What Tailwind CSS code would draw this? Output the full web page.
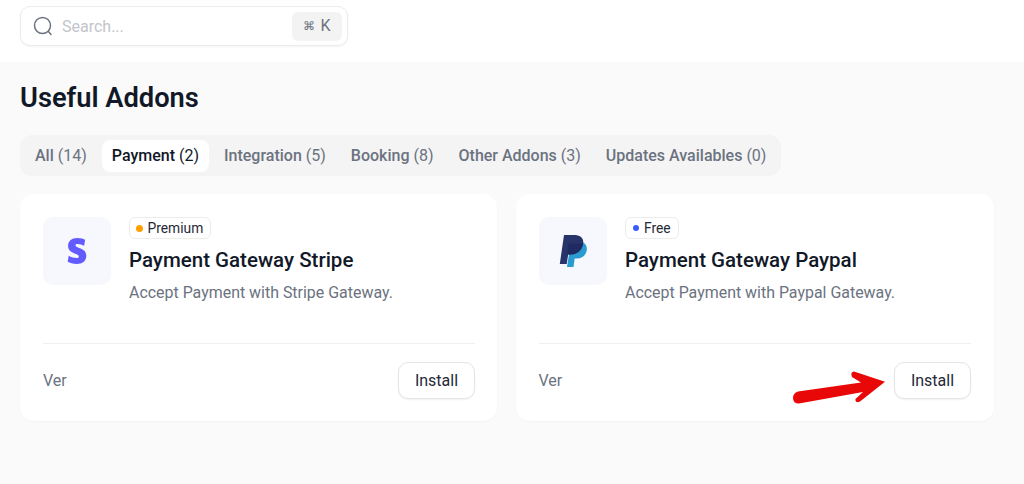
<!DOCTYPE html>
<html lang="en">
<head>
  <meta charset="UTF-8">
  <meta name="viewport" content="width=device-width, initial-scale=1.0">
  <title>Useful Addons</title>
  <script src="https://cdn.jsdelivr.net/npm/@tailwindcss/browser@4"></script>
</head>
<body class="relative h-[484px] w-[1024px] overflow-hidden bg-[#fafafa] font-['Roboto',sans-serif] text-[#111827]">
  <header class="h-[62px] bg-white px-5 pt-[6px]">
    <div class="flex h-[40px] w-[328px] items-center rounded-[10px] border border-[#ececec] bg-white pl-[12px] pr-[5px] shadow-[0_1px_2px_rgba(0,0,0,0.05)]">
      <svg class="h-[20px] w-[20px]" viewBox="0 0 20 20" fill="none" stroke="#6b7280" stroke-width="1.5" stroke-linecap="round"><circle cx="9.5" cy="9.5" r="8"/><path d="M15.5 15.5 18 18.5"/></svg>
      <span class="ml-[9px] flex-1 pt-[1px] text-[16px] text-[#c2c5cb]">Search...</span>
      <span class="flex h-[29px] w-[50px] items-center justify-center gap-[5px] rounded-[6px] bg-[#f3f3f3] text-[16px] text-[#6b7280]"><span class="text-[12px]">⌘</span>K</span>
    </div>
  </header>

  <main class="px-5">
    <h1 class="mt-[19px] h-[35px] text-[27.25px] leading-[35px] font-semibold">Useful Addons</h1>

    <div class="mt-[19px] flex h-[41px] w-[761px] items-center gap-[5px] rounded-[12px] bg-[#f4f4f4] px-[5px] text-[16px] font-medium whitespace-pre text-[#6b7280]">
      <span class="px-[10px]">All <span class="font-normal">(14)</span></span>
      <span class="flex h-[32px] items-center rounded-[8px] bg-white px-[10px] text-[#111827]">Payment <span class="font-normal">(2)</span></span>
      <span class="px-[10px]">Integration <span class="font-normal">(5)</span></span>
      <span class="px-[10px]">Booking <span class="font-normal">(8)</span></span>
      <span class="px-[10px]">Other Addons <span class="font-normal">(3)</span></span>
      <span class="px-[10px]">Updates Availables <span class="font-normal">(0)</span></span>
    </div>

    <div class="mt-[18px] flex gap-[19px]">
      <article class="h-[227px] w-[477px] rounded-[14px] bg-white pl-[23px] pr-[22px] pt-[23px] shadow-[0_1px_2px_rgba(0,0,0,0.03)]">
        <div class="flex h-[127px] gap-[18px] border-b border-[#f0f0f0]">
          <div class="flex h-[68px] w-[68px] items-center justify-center rounded-[10px] bg-[#f7f8fe]">
            <svg class="h-[26px] w-[26px]" viewBox="0 0 24 24" fill="#635bff"><path d="M13.976 9.15c-2.172-.806-3.356-1.426-3.356-2.409 0-.831.683-1.305 1.901-1.305 2.227 0 4.515.858 6.09 1.631l.89-5.494C18.252.975 15.697 0 12.165 0 9.667 0 7.589.654 6.104 1.872 4.56 3.147 3.757 4.992 3.757 7.218c0 4.039 2.467 5.76 6.476 7.219 2.585.92 3.445 1.574 3.445 2.583 0 .98-.84 1.545-2.354 1.545-1.875 0-4.965-.921-6.99-2.109l-.9 5.555C5.175 22.99 8.385 24 11.714 24c2.641 0 4.843-.624 6.328-1.813 1.664-1.305 2.525-3.236 2.525-5.732 0-4.128-2.524-5.851-6.594-7.305h.003z"/></svg>
          </div>
          <div>
            <span class="flex h-[22px] w-fit items-center gap-[4.5px] rounded-[6px] border border-[#ececec] pl-[6px] pr-[7px] text-[13.8px] text-[#1f2937]"><span class="h-[7px] w-[7px] rounded-full bg-[#ff9f00]"></span>Premium</span>
            <h2 class="mt-[7.5px] text-[20.5px] leading-[26px] font-medium">Payment Gateway Stripe</h2>
            <p class="mt-[9.5px] text-[15.95px] leading-[22px] text-[#6b7280]">Accept Payment with Stripe Gateway.</p>
          </div>
        </div>
        <div class="flex items-center justify-between pt-[18px]">
          <span class="pt-[1px] text-[16px] text-[#6b7280]">Ver</span>
          <button class="h-[37px] w-[77px] rounded-[10px] border border-[#e5e5e5] bg-white text-[16px] text-[#1f2937] shadow-[0_1px_2px_rgba(0,0,0,0.06)]">Install</button>
        </div>
      </article>

      <article class="h-[227px] w-[478px] rounded-[14px] bg-white pl-[22.5px] pr-[23px] pt-[23px] shadow-[0_1px_2px_rgba(0,0,0,0.03)]">
        <div class="flex h-[127px] gap-[18.5px] border-b border-[#f0f0f0]">
          <div class="flex h-[68px] w-[68px] items-center justify-center rounded-[10px] bg-[#f7f8fe]">
            <svg class="h-[33px] w-[28px]" viewBox="0 0 28 33">
              <path fill="#2a9bd1" d="M24 7.500c3 1.500 4.400 4.500 3.700 8-1 5-4.700 8-9.700 8h-2.300l-1.200 8.500H8l3-19z"/>
              <path fill="#27346a" d="M5 0h10c6 0 10 3 9.200 8.500C23 15.500 18 19.500 12 19.500H9.200L7.700 29H.8z"/>
              <path fill="#1f2860" d="M9.500 8.500h14.700C23 15.500 18 19.500 12 19.500H8z" opacity=".8"/>
            </svg>
          </div>
          <div>
            <span class="flex h-[22px] w-fit items-center gap-[5px] rounded-[6px] border border-[#ececec] px-[7px] text-[13.8px] text-[#1f2937]"><span class="h-[6px] w-[6px] rounded-full bg-[#3b5bfd]"></span>Free</span>
            <h2 class="mt-[7.5px] text-[20.5px] leading-[26px] font-medium">Payment Gateway Paypal</h2>
            <p class="mt-[9.5px] text-[15.95px] leading-[22px] text-[#6b7280]">Accept Payment with Paypal Gateway.</p>
          </div>
        </div>
        <div class="flex items-center justify-between pt-[18px]">
          <span class="pt-[1px] text-[16px] text-[#6b7280]">Ver</span>
          <button class="h-[37px] w-[77px] rounded-[10px] border border-[#e5e5e5] bg-white text-[16px] text-[#1f2937] shadow-[0_1px_2px_rgba(0,0,0,0.06)]">Install</button>
        </div>
      </article>
    </div>
  </main>

  <svg class="absolute left-[790px] top-[368px] h-[40px] w-[100px]" viewBox="0 0 100 40" fill="#e80808">
    <path d="M8 23.500 71 14.500 62 9Q60 4 64 3.500L95 13.700 70 33.500Q65 35.500 65.500 31L73 24 9 35.500Q3 35.500 3 30 3 25 8 23.500z"/>
  </svg>
</body>
</html>
